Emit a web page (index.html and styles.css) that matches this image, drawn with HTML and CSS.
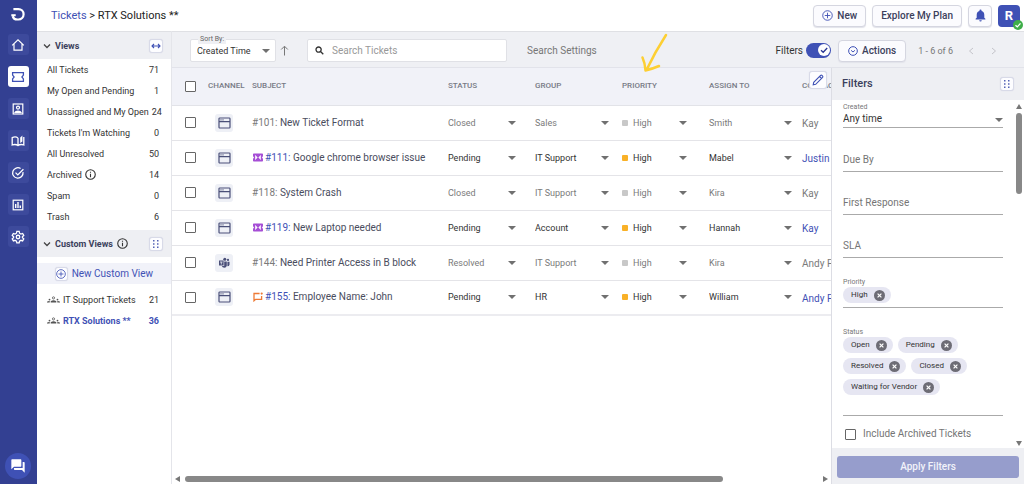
FILE: index.html
```html
<!DOCTYPE html>
<html lang="en">
<head>
    <meta charset="UTF-8">
    <meta name="viewport" content="width=device-width, initial-scale=1.0">
    <title>Tickets - RTX Solutions</title>
    <link rel="stylesheet" href="styles.css">
</head>
<body>
    <nav class="rail">
        <a href="#" class="logo" aria-label="Dashboard">
            <svg width="16" height="16" viewBox="0 0 16 16" fill="none" stroke="#fff" stroke-width="2.2"><path d="M3.4 3.1h5a5.2 5.2 0 0 1 0 10.4H7.200q-3.600 0-4.500-3.400"/><path d="M1.300 9.200h4.400" stroke-width="2"/></svg>
        </a>
        <a href="#" class="rail-link" aria-label="Home">
            <svg width="14" height="14" viewBox="0 0 14 14" fill="none" stroke="#fff" stroke-width="1.2"><path d="M1.2 7.4 7 1.8l5.8 5.6M3 6v6.2h8V6"/></svg>
        </a>
        <a href="#" class="rail-link active" aria-label="Tickets">
            <svg width="14" height="14" viewBox="0 0 14 14" fill="none" stroke="#3f51b5" stroke-width="1.3"><path d="M1.6 2.6h10.800v2.500l-1.500 1.900 1.500 1.900v2.500H1.600V8.900L3.100 7 1.600 5.100z"/></svg>
        </a>
        <a href="#" class="rail-link" aria-label="Contacts">
            <svg width="14" height="14" viewBox="0 0 14 14" fill="none" stroke="#fff" stroke-width="1.2"><rect x="2.2" y="2" width="9.6" height="10"/><circle cx="7" cy="5.6" r="1.5"/><path d="M4 10.4c.6-1.8 5.4-1.8 6 0z"/></svg>
        </a>
        <a href="#" class="rail-link" aria-label="Knowledge base">
            <svg width="14" height="14" viewBox="0 0 14 14" fill="none" stroke="#fff" stroke-width="1.3"><path d="M7 4v7.6M7 4C5.5 2.8 3 2.8 1.2 3.6V11c2-.7 4.3-.6 5.8.6 1.5-1.2 3.800-1.300 5.800-.6V3"/><path d="M9.2 3.600 11.400 1.600v6L9.200 9z" fill="#fff" stroke="none"/></svg>
        </a>
        <a href="#" class="rail-link" aria-label="Tasks">
            <svg width="14" height="14" viewBox="0 0 14 14" fill="none" stroke="#fff" stroke-width="1.3"><path d="M12 6.2A5.2 5.2 0 1 1 9.6 2.5"/><path d="m4.5 6.6 2.3 2.3 5.6-5.7"/></svg>
        </a>
        <a href="#" class="rail-link" aria-label="Reports">
            <svg width="14" height="14" viewBox="0 0 14 14" fill="none" stroke="#fff" stroke-width="1.2"><rect x="2.2" y="2.2" width="9.6" height="9.6"/><path d="M4.7 10V6M7 10V4M9.3 10V7.5" stroke-width="1.4"/></svg>
        </a>
        <a href="#" class="rail-link" aria-label="Settings">
            <svg width="14" height="14" viewBox="0 0 24 24" fill="none" stroke="#fff" stroke-width="2.2"><circle cx="12" cy="12" r="3"/><path d="M10 2.5h4l.6 3 2.4 1.4 2.9-1 2 3.5-2.3 2v1.8l2.3 2-2 3.5-2.9-1-2.4 1.4-.6 3h-4l-.6-3L7 17.7l-2.9 1-2-3.5 2.3-2v-1.800l-2.300-2 2-3.500 2.900 1 2.400-1.400z"/></svg>
        </a>
        <button class="chat" aria-label="Chat">
            <svg width="16" height="16" viewBox="0 0 24 24" fill="#fff"><path d="M21 6h-2v9H6v2c0 .55.45 1 1 1h11l4 4V7c0-.55-.45-1-1-1zm-4 6V3c0-.55-.45-1-1-1H3c-.55 0-1 .45-1 1v14l4-4h10c.55 0 1-.45 1-1z"/></svg>
        </button>
    </nav>

    <div class="app">
        <header class="topbar">
            <div class="breadcrumb"><a href="#">Tickets</a> &gt; RTX Solutions **</div>
            <button class="btn">
                <svg width="11" height="11" viewBox="0 0 12 12" fill="none" stroke="#3f51b5"><circle cx="6" cy="6" r="5.2"/><path d="M6 3v6M3 6h6"/></svg>
                New
            </button>
            <button class="btn">Explore My Plan</button>
            <button class="btn bell" aria-label="Notifications">
                <svg width="13" height="13" viewBox="0 0 24 24" fill="#3f51b5"><path d="M12 23a2.3 2.3 0 0 0 2.300-2.300H9.700A2.300 2.300 0 0 0 12 23zm7-7v-5.500c0-3.500-1.800-6.100-5-6.900V3a2 2 0 0 0-4 0v.6c-3.200.8-5 3.400-5 6.900V16l-2 2v1.500h18V18z"/></svg>
            </button>
            <button class="avatar">R
                <svg class="online" width="10" height="10" viewBox="0 0 10 10"><circle cx="5" cy="5" r="5" fill="#3fae49"/><path d="m2.5 5.2 1.8 1.7 3.2-3.5" fill="none" stroke="#fff" stroke-width="1.3"/></svg>
            </button>
        </header>

        <div class="workspace">
            <aside class="sidebar">
                <h2 class="side-head">
                    <svg width="8" height="8" viewBox="0 0 8 8" fill="none" stroke="#444" stroke-width="1.3"><path d="m1 2.5 3 3 3-3"/></svg>
                    Views
                    <button class="mini" aria-label="Resize">
                        <svg width="10" height="8" viewBox="0 0 10 8" fill="none" stroke="#3f51b5" stroke-width="1.1"><path d="M1 4h8M3 2 1 4l2 2M7 2l2 2-2 2"/></svg>
                    </button>
                </h2>
                <ul class="views">
                    <li><a href="#">All Tickets</a><span>71</span></li>
                    <li><a href="#">My Open and Pending</a><span>1</span></li>
                    <li><a href="#">Unassigned and My Open</a><span>24</span></li>
                    <li><a href="#">Tickets I'm Watching</a><span>0</span></li>
                    <li><a href="#">All Unresolved</a><span>50</span></li>
                    <li>
                        <a href="#">Archived</a>
                        <svg width="11" height="11" viewBox="0 0 12 12" fill="none" stroke="#333" stroke-width="1.2"><circle cx="6" cy="6" r="5.2"/><path d="M6 5.2V9M6 3v1.2"/></svg>
                        <span>14</span>
                    </li>
                    <li><a href="#">Spam</a><span>0</span></li>
                    <li><a href="#">Trash</a><span>6</span></li>
                </ul>
                <h2 class="side-head">
                    <svg width="8" height="8" viewBox="0 0 8 8" fill="none" stroke="#444" stroke-width="1.3"><path d="m1 2.5 3 3 3-3"/></svg>
                    Custom Views
                    <svg width="11" height="11" viewBox="0 0 12 12" fill="none" stroke="#333" stroke-width="1.2"><circle cx="6" cy="6" r="5.2"/><path d="M6 5.2V9M6 3v1.2"/></svg>
                    <button class="mini" aria-label="Reorder">
                        <svg width="8" height="10" viewBox="0 0 8 10" fill="#5563b5"><path d="M1 1h1.5v1.5H1zM5 1h1.5v1.5H5zM1 4.2h1.5v1.5H1zM5 4.2h1.5v1.5H5zM1 7.4h1.5v1.5H1zM5 7.4h1.5v1.5H5z"/></svg>
                    </button>
                </h2>
                <button class="new-view">
                    <span class="mini">
                        <svg width="10" height="10" viewBox="0 0 12 12" fill="none" stroke="#3f51b5"><circle cx="6" cy="6" r="5.2"/><path d="M6 3v6M3 6h6"/></svg>
                    </span>
                    New Custom View
                </button>
                <ul class="views custom">
                    <li>
                        <svg width="13" height="7" viewBox="0 0 13 7" fill="#555"><circle cx="2.5" cy="3.6" r=".9"/><circle cx="10.5" cy="3.6" r=".9"/><path d="M3.700 6.500V5.200q2.800-1.800 5.600 0v1.300zM0 6.500v-.8q1.200-1 2.700-.7v1.500zM13 6.500v-.8q-1.200-1-2.700-.7v1.500z"/><circle cx="6.500" cy="1.900" r="1.100" fill="none" stroke="#555" stroke-width=".8"/></svg>
                        <a href="#">IT Support Tickets</a><span>21</span>
                    </li>
                    <li class="current">
                        <svg width="13" height="7" viewBox="0 0 13 7" fill="#555"><circle cx="2.5" cy="3.6" r=".9"/><circle cx="10.5" cy="3.6" r=".9"/><path d="M3.700 6.500V5.200q2.800-1.800 5.600 0v1.300zM0 6.500v-.8q1.200-1 2.700-.7v1.500zM13 6.500v-.8q-1.200-1-2.700-.7v1.500z"/><circle cx="6.500" cy="1.900" r="1.100" fill="none" stroke="#555" stroke-width=".8"/></svg>
                        <a href="#">RTX Solutions **</a><span>36</span>
                    </li>
                </ul>
            </aside>

            <main class="content">
                <div class="toolbar">
                    <div class="sort picker">
                        <label for="sort">Sort By:</label>
                        <select id="sort"><option>Created Time</option></select>
                    </div>
                    <button class="plain direction" aria-label="Sort direction">
                        <svg width="9" height="11" viewBox="0 0 9 11" fill="none" stroke="#777"><path d="M4.5 10.5v-9M1.2 4.5l3.3-3.3 3.3 3.3"/></svg>
                    </button>
                    <div class="search">
                        <svg width="9" height="9" viewBox="0 0 9 9" fill="none" stroke="#333" stroke-width="1.3"><circle cx="3.6" cy="3.6" r="2.6"/><path d="m5.5 5.5 2.8 2.8"/></svg>
                        <input type="text" placeholder="Search Tickets" aria-label="Search Tickets">
                    </div>
                    <button class="plain settings">Search Settings</button>
                    <label class="filters-label" for="filters">Filters</label>
                    <span class="toggle">
                        <input type="checkbox" id="filters" checked>
                        <svg class="knob" width="12" height="12" viewBox="0 0 12 12"><circle cx="6" cy="6" r="6" fill="#fff"/><path d="m3 6.2 2.2 2.1L9.2 4" fill="none" stroke="#283593" stroke-width="1.3"/></svg>
                    </span>
                    <button class="btn actions">
                        <svg width="10" height="10" viewBox="0 0 12 12" fill="none" stroke="#3f51b5" stroke-width="1.2"><circle cx="6" cy="6" r="5.2"/><path d="m3.7 5.2 2.3 2 2.3-2"/></svg>
                        Actions
                    </button>
                    <span class="range">1 - 6 of 6</span>
                    <button class="plain page" aria-label="Previous"><svg width="6" height="8" viewBox="0 0 6 8" fill="none" stroke="#c4c4ca"><path d="M5 1 1.5 4 5 7"/></svg></button>
                    <button class="plain page" aria-label="Next"><svg width="6" height="8" viewBox="0 0 6 8" fill="none" stroke="#c4c4ca"><path d="m1 1 3.5 3L1 7"/></svg></button>
                </div>

                <div class="panes">
                    <section class="tickets">
                        <button class="mini edit" aria-label="Edit columns">
                            <svg width="12" height="12" viewBox="0 0 12 12" fill="none" stroke="#3f51b5" stroke-width="1.1"><path d="m1.200 10.800.5-2.500 6.900-6.900q.7-.6 1.400 0l.6.6q.6.700 0 1.400l-6.900 6.900zM7.600 2.500l1.900 1.900"/></svg>
                        </button>
                        <table>
                            <colgroup>
                                <col class="c-check"><col class="c-channel"><col><col class="c-pick"><col class="c-pick"><col class="c-pick"><col class="c-assign"><col class="c-contact">
                            </colgroup>
                            <thead>
                                <tr>
                                    <th><input type="checkbox" class="check" aria-label="Select all"></th>
                                    <th>CHANNEL</th><th>SUBJECT</th><th>STATUS</th><th>GROUP</th><th>PRIORITY</th><th>ASSIGN TO</th><th>CONTACT</th>
                                </tr>
                            </thead>
                            <tbody id="rows"></tbody>
                        </table>
                        <div class="hscroll"><i class="left"></i><div class="track"><div class="thumb"></div></div><i class="right"></i></div>
                    </section>

                    <form class="filters">
                        <h2>Filters
                            <button type="button" class="mini" aria-label="Arrange">
                                <svg width="8" height="10" viewBox="0 0 8 10" fill="#5563b5"><path d="M1 1h1.5v1.5H1zM5 1h1.5v1.5H5zM1 4.2h1.5v1.5H1zM5 4.2h1.5v1.5H5zM1 7.4h1.5v1.5H1zM5 7.4h1.5v1.5H5z"/></svg>
                            </button>
                        </h2>
                        <div class="filter-body">
                            <div class="fields">
                                <div class="field">
                                    <label for="created">Created</label>
                                    <div class="picker"><select id="created"><option>Any time</option></select></div>
                                </div>
                                <input class="line" type="text" placeholder="Due By" aria-label="Due By">
                                <input class="line" type="text" placeholder="First Response" aria-label="First Response">
                                <input class="line" type="text" placeholder="SLA" aria-label="SLA">
                                <div class="field priority-field">
                                    <span class="caption">Priority</span>
                                    <div class="chips" data-chips="High"></div>
                                </div>
                                <div class="field status-field">
                                    <span class="caption">Status</span>
                                    <div class="chips" data-chips="Open,Pending,Resolved,Closed,Waiting for Vendor"></div>
                                </div>
                                <label class="archived"><input type="checkbox" class="check">Include Archived Tickets</label>
                            </div>
                            <div class="vscroll"><i class="up"></i><div class="track"><div class="thumb"></div></div><i class="down"></i></div>
                        </div>
                        <footer><button type="button" class="apply">Apply Filters</button></footer>
                    </form>
                </div>

                <svg class="pointer" width="30" height="42" viewBox="0 0 30 42" fill="none" stroke="#fdcf33" stroke-width="2.5" stroke-linecap="round" stroke-linejoin="round"><path d="M26 3Q15 20 6.500 38M2.500 25.500Q5 31 5.500 38.500 12 37 19 34"/></svg>
            </main>
        </div>
    </div>

    <script>
        const windowIcon = '<svg width="13" height="12" viewBox="0 0 13 12" fill="none" stroke="#4a4f78" stroke-width="1.2"><rect x="1" y="1" width="11" height="10" rx=".8"/><path d="M1 4.700h11M2.500 2.900h1M4.500 2.900h1"/></svg>';
        const teamsIcon = '<svg width="12" height="12" viewBox="0 0 12 12" fill="#4a4f78"><circle cx="6.8" cy="2.3" r="1.5"/><circle cx="10" cy="2.9" r="1.1"/><path d="M1 3.5h4.6v5H1z"/><path d="M6.2 4.5h2.6v4.2q-.4 2-2.5 2-2 0-2.5-1.6h2.4zM9.400 4.700h2.100v3q-.3 1.500-2.100 1.500z"/><path d="M2 5h2.600M3.300 5v2.500" stroke="#eef0f6" stroke-width=".8"/></svg>';
        const incidentIcon = '<svg width="10" height="9" viewBox="0 0 10 9"><path d="M.8.5h8.400q.8 0 .8.800v2.300a.9.900 0 0 0 0 1.800v2.300q0 .8-.8.800H.8Q0 8.500 0 7.700V5.400a.9.900 0 0 0 0-1.800V1.300Q0 .5.800.5z" fill="#a64fd6"/><path d="M2.500 2.500 4.200 4.500 2.500 6.500zM7.500 2.500 5.800 4.500l1.700 2z" fill="#fff" stroke="#fff" stroke-width=".6"/></svg>';
        const requestIcon = '<svg width="10" height="10" viewBox="0 0 10 10" fill="none" stroke="#ee7a35" stroke-width="1.3"><path d="M6.600 1.500H1v7.300l1.600-1.500h6V4"/><circle cx="8.700" cy="1.600" r="1.100" fill="#ee7a35" stroke="none"/></svg>';

        const tickets = [
            { id: 101, subject: 'New Ticket Format', status: 'Closed', group: 'Sales', agent: 'Smith', contact: 'Kay' },
            { id: 111, subject: 'Google chrome browser issue', status: 'Pending', group: 'IT Support', agent: 'Mabel', contact: 'Justin', icon: incidentIcon },
            { id: 118, subject: 'System Crash', status: 'Closed', group: 'IT Support', agent: 'Kira', contact: 'Kay' },
            { id: 119, subject: 'New Laptop needed', status: 'Pending', group: 'Account', agent: 'Hannah', contact: 'Kay', icon: incidentIcon },
            { id: 144, subject: 'Need Printer Access in B block', status: 'Resolved', group: 'IT Support', agent: 'Kira', contact: 'Andy F', channel: teamsIcon },
            { id: 155, subject: 'Employee Name: John', status: 'Pending', group: 'HR', agent: 'William', contact: 'Andy F', icon: requestIcon }
        ];

        function picker(name, value) {
            return `<div class="picker ${name}"><select aria-label="${name}"><option>${value}</option></select></div>`;
        }

        // Build the ticket rows
        document.getElementById('rows').innerHTML = tickets.map(t => `
            <tr class="${t.status === 'Pending' ? 'open' : 'done'}">
                <td><input type="checkbox" class="check" aria-label="Select ticket ${t.id}"></td>
                <td><span class="channel">${t.channel || windowIcon}</span></td>
                <td class="subject"><div>${t.icon || ''}<a href="#">#${t.id}:</a>&nbsp;${t.subject}</div></td>
                <td>${picker('status', t.status)}</td>
                <td>${picker('group', t.group)}</td>
                <td>${picker('priority', 'High')}</td>
                <td>${picker('agent', t.agent)}</td>
                <td class="contact"><a href="#">${t.contact}</a></td>
            </tr>`).join('');

        // Fill the chip lists in the filter panel
        document.querySelectorAll('.chips').forEach(list => {
            list.innerHTML = list.dataset.chips.split(',').map(name => `
                <span class="chip">${name}<button type="button" aria-label="Remove ${name}"><svg width="11" height="11" viewBox="0 0 11 11"><circle cx="5.5" cy="5.5" r="5.5" fill="#6d6c75"/><path d="m3.6 3.6 3.8 3.8M7.4 3.6 3.6 7.4" stroke="#fff" stroke-width="1.2"/></svg></button></span>`).join('');
        });
    </script>
</body>
</html>
```
FILE: styles.css
```css
* {
    box-sizing: border-box;
}

body {
    font-family: Roboto, Arial, sans-serif;
    font-size: 10px;
    line-height: 14px;
    color: #333;
    margin: 0;
    display: flex;
    height: 100vh;
    overflow: hidden;
    background-color: #fff;
}

button, input, select {
    font: inherit;
    color: inherit;
    margin: 0;
    padding: 0;
}

button {
    cursor: pointer;
}

svg {
    display: block;
    flex-shrink: 0;
}

a {
    text-decoration: none;
    color: inherit;
}

h2 {
    margin: 0;
}

/* Left rail */
.rail {
    width: 37px;
    flex-shrink: 0;
    background-color: #334092;
    display: flex;
    flex-direction: column;
    align-items: center;
    gap: 11px;
    padding: 6px 1px 5px 0;
}

.logo {
    height: 17px;
}

.rail-link {
    width: 21px;
    height: 21px;
    border-radius: 3px;
    background-color: #3d4a9c;
    display: flex;
    align-items: center;
    justify-content: center;
}

.rail-link.active {
    background-color: #fff;
}

.chat {
    margin-top: auto;
    width: 26px;
    height: 26px;
    border: 0;
    border-radius: 50%;
    background-color: #3f51b5;
    display: flex;
    align-items: center;
    justify-content: center;
}

.app {
    flex: 1;
    min-width: 0;
    display: flex;
    flex-direction: column;
}

/* Top bar */
.topbar {
    height: 31px;
    flex-shrink: 0;
    display: flex;
    align-items: center;
    gap: 6px;
    padding: 0 4px 0 14px;
}

.breadcrumb {
    font-size: 11px;
    color: #222;
    margin-right: auto;
}

.breadcrumb a {
    color: #3f51b5;
}

.btn {
    height: 22px;
    display: flex;
    align-items: center;
    gap: 4px;
    padding: 0 8px;
    font-weight: 500;
    color: #3b3f5c;
    background-color: #fbfbfe;
    border: 1px solid #d5d6e0;
    border-radius: 4px;
    box-shadow: 0 1px 1px #e2e3ea;
    white-space: nowrap;
}

.bell {
    width: 24px;
    padding: 0 5px;
}

.avatar {
    position: relative;
    width: 22px;
    height: 22px;
    border: 0;
    border-radius: 4px;
    background-color: #3f51b5;
    color: #fff;
    font-size: 13px;
    font-weight: 700;
}

.online {
    position: absolute;
    right: -3px;
    bottom: -3px;
}

.workspace {
    flex: 1;
    min-height: 0;
    display: flex;
}

/* Sidebar */
.sidebar {
    width: 134px;
    flex-shrink: 0;
    border-top: 1px solid #dfe0e4;
}

.side-head {
    height: 27px;
    display: flex;
    align-items: center;
    gap: 4px;
    padding: 0 8px 0 6px;
    font-size: 9px;
    font-weight: 700;
    color: #3b3f5c;
    background-color: #eeeff3;
}

.mini {
    width: 14px;
    height: 14px;
    display: flex;
    align-items: center;
    justify-content: center;
    background-color: #fdfdff;
    border: 1px solid #d8dae8;
    border-radius: 3px;
    box-shadow: 0 0 1px #cfd1e0;
}

.side-head .mini {
    margin-left: auto;
}

.views {
    list-style: none;
    margin: 0;
    padding: 0 12px 3px 10px;
    font-size: 9px;
}

.views li {
    display: flex;
    align-items: center;
    gap: 3px;
    height: 21px;
    white-space: nowrap;
}

.views li span {
    margin-left: auto;
}

.views.custom {
    padding-top: 5px;
}

.views .current {
    color: #3f51b5;
    font-weight: 700;
}

.new-view {
    width: 100%;
    height: 21px;
    margin-top: 6px;
    padding: 0 18px;
    display: flex;
    align-items: center;
    gap: 4px;
    border: 0;
    background-color: #f1f2f9;
    color: #3f51b5;
    white-space: nowrap;
}

/* Toolbar */
.content {
    position: relative;
    flex: 1;
    min-width: 0;
    display: flex;
    flex-direction: column;
    border-left: 1px solid #e4e5ea;
}

.toolbar {
    height: 37px;
    flex-shrink: 0;
    display: flex;
    align-items: center;
    padding: 2px 27px 0 18px;
    background-color: #eff0f4;
    border-top: 1px solid #dfe0e4;
    border-bottom: 1px solid #e2e3ea;
}

.picker {
    position: relative;
}

.picker::after {
    content: "";
    position: absolute;
    right: 0;
    top: 50%;
    margin-top: -2px;
    border: 4px solid transparent;
    border-top-color: #707070;
    border-bottom: 0;
    pointer-events: none;
}

.picker select {
    appearance: none;
    display: block;
    width: 100%;
    border: 0;
    background: transparent;
}

.sort {
    width: 86px;
    height: 23px;
    padding: 4px 6px;
    background-color: #fff;
    border: 1px solid #e0e1e6;
    border-radius: 2px;
    font-size: 9px;
}

.sort::after {
    right: 5px;
}

.sort label {
    position: absolute;
    left: 7px;
    top: -6px;
    padding: 0 2px;
    font-size: 7px;
    line-height: 10px;
    color: #666;
    background-color: #eff0f4;
}

.plain {
    border: 0;
    background: transparent;
    color: #777;
}

.direction {
    margin: 0 18px 0 4px;
}

.search {
    flex: 0 1 200px;
    height: 23px;
    display: flex;
    align-items: center;
    gap: 8px;
    padding: 0 7px;
    background-color: #fff;
    border: 1px solid #e0e1e6;
    border-radius: 2px;
}

.search input {
    flex: 1;
    min-width: 0;
    border: 0;
    background: transparent;
}

.search input::placeholder {
    color: #999;
}

.settings {
    margin: 0 auto 0 20px;
    white-space: nowrap;
}

.filters-label {
    color: #333;
}

.toggle {
    position: relative;
    margin: 0 7px 0 3px;
}

.toggle input {
    appearance: none;
    display: block;
    width: 25px;
    height: 15px;
    border-radius: 8px;
    background-color: #3f51b5;
}

.knob {
    position: absolute;
    right: 1px;
    top: 1px;
    pointer-events: none;
}

.actions {
    padding: 0 9px;
}

.range {
    font-size: 9px;
    color: #777;
    margin: 0 15px 0 12px;
    white-space: nowrap;
}

.page + .page {
    margin-left: 17px;
}

.panes {
    flex: 1;
    min-height: 0;
    display: flex;
}

/* Ticket list */
.tickets {
    position: relative;
    flex: 1;
    min-width: 0;
    overflow: hidden;
    display: flex;
    flex-direction: column;
}

table {
    width: 100%;
    min-width: 710px;
    table-layout: fixed;
    border-collapse: collapse;
}

.c-check {
    width: 36px;
}

.c-channel {
    width: 44px;
}

.c-pick {
    width: 87px;
}

.c-assign {
    width: 93px;
}

.c-contact {
    width: 80px;
}

th, td {
    padding: 0;
    text-align: left;
    white-space: nowrap;
}

th {
    height: 37px;
    font-size: 8px;
    font-weight: 500;
    color: #777a85;
    background-color: #f1f2f8;
    border-bottom: 1px solid #e2e3e8;
}

td {
    height: 35px;
    border-bottom: 1px solid #e4e4e8;
}

tbody tr:last-child td {
    border-bottom: 2px solid #ececf0;
}

.check {
    appearance: none;
    display: block;
    width: 11px;
    height: 11px;
    border: 1px solid #666;
    border-radius: 1px;
    background-color: #fff;
}

table .check {
    margin-left: 13px;
}

.channel {
    width: 18px;
    height: 18px;
    margin-left: 7px;
    display: flex;
    align-items: center;
    justify-content: center;
    border-radius: 3px;
    background-color: #eef0f6;
}

.subject div {
    display: flex;
    align-items: center;
    color: #4a4d5e;
}

.subject svg {
    margin: 0 2px 0 1px;
}

.open .subject a,
.open .contact {
    color: #3f51b5;
}

.done .subject a,
.done .contact,
.done .picker {
    color: #7a7a7a;
}

.tickets .picker {
    font-size: 9px;
}

.status {
    width: 68px;
}

.group {
    width: 74px;
}

.priority {
    width: 65px;
    display: flex;
    align-items: center;
    gap: 5px;
}

.priority::before {
    content: "";
    width: 6px;
    height: 6px;
    flex-shrink: 0;
    border-radius: 1px;
    background-color: #f9b127;
}

.done .priority::before {
    background-color: #c8c8c8;
}

.agent {
    width: 83px;
}

.contact a {
    display: block;
    padding-top: 3px;
}

.edit {
    position: absolute;
    top: 3px;
    right: 4px;
    width: 18px;
    height: 18px;
}

/* Scroll bars */
.hscroll {
    margin-top: auto;
    display: flex;
    align-items: center;
    gap: 5px;
    height: 10px;
    padding: 0 3px;
}

.vscroll {
    display: flex;
    flex-direction: column;
    align-items: center;
    gap: 4px;
    width: 10px;
    padding: 4px 0 2px;
}

.track {
    flex: 1;
}

.thumb {
    background-color: #888;
    border-radius: 3px;
}

.hscroll .thumb {
    width: 85%;
    height: 6px;
}

.vscroll .thumb {
    width: 6px;
    height: 25%;
}

.hscroll i, .vscroll i {
    border: 3px solid transparent;
}

.hscroll .left {
    border-right: 5px solid #777;
    border-left: 0;
}

.hscroll .right {
    border-left: 5px solid #777;
    border-right: 0;
}

.vscroll .up {
    border-bottom: 5px solid #777;
    border-top: 0;
}

.vscroll .down {
    border-top: 5px solid #777;
    border-bottom: 0;
}

/* Filter panel */
.filters {
    width: 193px;
    flex-shrink: 0;
    display: flex;
    flex-direction: column;
    border-left: 1px solid #dcdde4;
    background-color: #fff;
}

.filters h2 {
    height: 32px;
    flex-shrink: 0;
    display: flex;
    align-items: center;
    justify-content: space-between;
    padding: 0 10px;
    font-size: 11px;
    font-weight: 500;
    color: #3b3f5c;
    background-color: #eeeff3;
}

.filter-body {
    flex: 1;
    min-height: 0;
    display: flex;
}

.fields {
    flex: 1;
    min-width: 0;
    padding: 3px 11px 0;
    overflow: hidden;
}

.field {
    border-bottom: 1px solid #aaa;
}

.field label, .caption {
    display: block;
    font-size: 7px;
    line-height: 9px;
    color: #777;
}

.field .picker {
    padding-bottom: 1px;
}

.line {
    display: block;
    width: 100%;
    height: 24px;
    margin-top: 20px;
    border: 0;
    border-bottom: 1px solid #aaa;
    background: transparent;
}

.line + .line {
    margin-top: 19px;
}

.line::placeholder {
    color: #757575;
}

.priority-field {
    margin-top: 20px;
    padding-bottom: 4px;
}

.status-field {
    margin-top: 20px;
    padding-bottom: 20px;
}

.chips {
    display: flex;
    flex-wrap: wrap;
    gap: 5px;
}

.chip {
    display: flex;
    align-items: center;
    gap: 6px;
    height: 16px;
    padding: 0 6px 0 8px;
    border-radius: 8px;
    background-color: #e6e6f2;
    font-size: 8px;
}

.chip button {
    border: 0;
    background: transparent;
}

.archived {
    display: flex;
    align-items: center;
    gap: 7px;
    margin-top: 11px;
    padding-left: 2px;
    color: #757575;
}

.filters footer {
    flex-shrink: 0;
    padding: 8px 5px 6px;
    background-color: #eeeff3;
}

.apply {
    width: 100%;
    height: 22px;
    border: 0;
    border-radius: 3px;
    background-color: #969dcc;
    color: #f2f3fa;
    font-weight: 500;
}

/* Hand-drawn marker over the priority column */
.pointer {
    position: absolute;
    left: 468px;
    top: 1px;
    pointer-events: none;
}
```
